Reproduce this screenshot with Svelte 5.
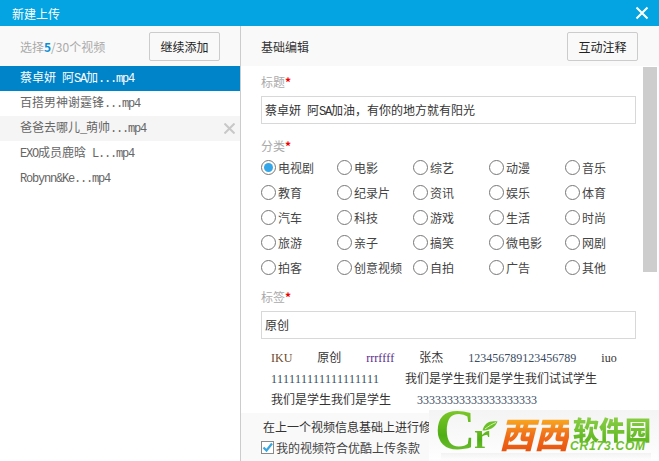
<script>
  const files = [
    { name: '蔡卓妍 阿SA加...mp4', cls: 'sel' },
    { name: '百搭男神谢霆锋...mp4', cls: '' },
    { name: '爸爸去哪儿_萌帅...mp4', cls: 'hover' },
    { name: 'EXO成员鹿晗 L...mp4', cls: '' },
    { name: 'Robynn&Ke...mp4', cls: '' }
  ];
  const parts = (s) => s.split(/([\x00-\x7f]+)/).filter(Boolean).map((t) => ({ t, ascii: /^[\x00-\x7f]/.test(t) }));
  const title = parts('蔡卓妍 阿SA加油，有你的地方就有阳光');
  const cats = ['电视剧','电影','综艺','动漫','音乐','教育','纪录片','资讯','娱乐','体育','汽车','科技','游戏','生活','时尚','旅游','亲子','搞笑','微电影','网剧','拍客','创意视频','自拍','广告','其他'];
</script>

<div class="win">
  <header class="title">
    <span>新建上传</span>
    <svg class="close" width="14" height="14" viewBox="0 0 14 14"><path d="M1.5 1.5l11 11M12.5 1.5l-11 11" stroke="#fff" stroke-width="2" fill="none"/></svg>
  </header>
  <div class="body">
    <aside class="left">
      <div class="bar lbar">
        <span class="count">选择<b>5</b>/30个视频</span>
        <button class="btn">继续添加</button>
      </div>
      <ul class="files">
        {#each files as f}
          <li class={f.cls}>
            <span class="fname">{#each parts(f.name) as p}{#if p.ascii}<span class="lat">{p.t}</span>{:else}{p.t}{/if}{/each}</span>
            {#if f.cls === 'hover'}
              <svg width="11" height="11" viewBox="0 0 11 11"><path d="M.5 .5l10 10M10.5 .5l-10 10" stroke="#c8c8c8" stroke-width="2" fill="none"/></svg>
            {/if}
          </li>
        {/each}
      </ul>
    </aside>
    <main class="right">
      <div class="bar rbar">
        <span class="edit">基础编辑</span>
        <button class="btn">互动注释</button>
      </div>
      <div class="scroll">
        <div class="form">
          <div class="label first">标题<i>*</i></div>
          <div class="input">{#each title as p}{#if p.ascii}<span class="lat">{p.t}</span>{:else}{p.t}{/if}{/each}</div>
          <div class="label cat">分类<i>*</i></div>
          <div class="grid">
            {#each cats as c, i}
              <div class="opt">
                <span class="radio" class:on={i === 0}></span>
                <span class="otext">{c}</span>
              </div>
            {/each}
          </div>
          <div class="label tag">标签<i>*</i></div>
          <div class="input">原创</div>
          <div class="tags">
            <div class="tl l1"><span class="c1">IKU</span><span>原创</span><span class="c2">rrrffff</span><span>张杰</span><span class="c3">123456789123456789</span><span class="c4">iuo</span></div>
            <div class="tl l2"><span class="c3">111111111111111111</span><span>我们是学生我们是学生我们试试学生</span></div>
            <div class="tl l3"><span>我们是学生我们是学生</span><span class="c3">33333333333333333333</span></div>
          </div>
        </div>
        <div class="track"><div class="thumb"></div></div>
      </div>
      <footer class="foot">
        <div class="inherit">在上一个视频信息基础上进行修改</div>
        <div class="agree">
          <svg width="13" height="13" viewBox="0 0 13 13"><rect x=".5" y=".5" width="12" height="12" fill="#fff" stroke="#8a8a8a"/><path d="M2.5 6.5l3 3 5.5-7" stroke="#3aa6e0" stroke-width="2.2" fill="none"/></svg>
          <span>我的视频符合优酷上传条款</span>
        </div>
      </footer>
    </main>
  </div>

  <div class="mark">
    <span class="bigc">C</span>
    <span class="smallr">r</span>
    <svg class="leaf" width="16" height="11" viewBox="0 0 16 11"><path d="M.5 10.5C2 3 8 0 15.5 1.5 13 8 7 10.5.5 10.5z" fill="#6cc12a"/><path d="M3 9C7 6 10 4 14 2.5" stroke="#d8f0b0" fill="none"/></svg>
    <div class="xixi"><span>西</span><span>西</span></div>
    <div class="rj">软件园</div>
    <div class="dom">CR173.COM</div>
    <div class="shine"></div>
  </div>
</div>

<style>
  :global(body) { margin: 0; }
  .win {
    position: relative;
    width: 659px; height: 461px; overflow: hidden; background: #fff;
    font-family: "Noto Sans CJK SC", sans-serif; font-size: 12px; color: #333;
    display: flex; flex-direction: column;
  }
  .title {
    height: 26px; background: #04a3e1; color: #fff; flex: none;
    display: flex; align-items: center; justify-content: space-between;
    padding: 0 10px 0 12px;
  }
  .body { flex: 1; display: flex; min-height: 0; }
  .left { width: 240px; flex: none; border-right: 1px solid #ccc; display: flex; flex-direction: column; }
  .right { flex: 1; display: flex; flex-direction: column; min-width: 0; }
  .bar { height: 40px; flex: none; background: #f9f9f9; display: flex; align-items: center; justify-content: space-between; }
  .lbar { padding: 0 20px; }
  .rbar { padding: 0 21px 0 20px; }
  .count { color: #aaa; }
  .count b { color: #0a8fd6; }
  .edit { color: #333; }
  .btn {
    width: 71px; height: 29px; padding: 0; box-sizing: border-box; background: #f9f9f9;
    border: 1px solid #ccc; border-radius: 2px; font: inherit; color: #222;
  }
  .files { list-style: none; margin: 0; padding: 0; }
  .files li {
    height: 25px; padding: 0 5px 0 20px; display: flex; align-items: center; justify-content: space-between;
    color: #666;
  }
  .fname { white-space: pre; line-height: 24px; padding-bottom: 1px; }
  .lat { font-family: "Liberation Mono", monospace; font-size: 12px; letter-spacing: -1.2px; white-space: pre; }
  .files li.sel { background: #0084c9; color: #fff; }
  .files li.hover { background: #f5f5f5; }
  .scroll { flex: 1; display: flex; min-height: 0; overflow: hidden; }
  .form { width: 402px; flex: none; padding-left: 20px; box-sizing: border-box; }
  .track { width: 14px; flex: none; padding-top: 1px; }
  .thumb { height: 205px; background: #cdcdcd; }
  .label { color: #aaa; line-height: 16px; }
  .label i { color: #e00; font-style: normal; font-weight: bold; }
  .first { margin-top: 8px; margin-bottom: 6px; }
  .cat { margin-top: 14px; margin-bottom: 1px; }
  .tag { margin-top: 9px; margin-bottom: 6px; }
  .input {
    width: 375px; height: 28px; box-sizing: border-box; border: 1px solid #d8d8d8;
    line-height: 25px; padding-left: 3px; color: #333; white-space: pre;
  }
  .grid { display: grid; grid-template-columns: repeat(5, 76px); grid-auto-rows: 25px; }
  .opt { display: flex; align-items: center; gap: 2px; white-space: nowrap; color: #444; }
  .otext { margin-top: -1px; }
  .radio {
    width: 15px; height: 15px; box-sizing: border-box; border: 1px solid #777; border-radius: 50%; background: #fff; flex: none;
    display: flex; align-items: center; justify-content: center;
  }
  .radio.on::after { content: ""; width: 9px; height: 9px; border-radius: 50%; background: #35a6e8; }
  .tags { padding: 9px 0 0 10px; }
  .tl { height: 21px; line-height: 20px; display: flex; gap: 25px; white-space: nowrap; font-kerning: none; font-family: "Liberation Serif", "Noto Sans CJK SC", serif; color: #333; }
  .l2, .l3 { gap: 26px; }
  .c1 { color: #6b4a2a; }
  .c2 { color: #5a2a8a; }
  .c3 { color: #3a4c64; }
  .foot { flex: none; height: 48px; background: #f9f9f9; padding-left: 20px; }
  .inherit { padding: 6px 0 0 2px; line-height: 16px; color: #333; white-space: nowrap; }
  .agree { display: flex; align-items: center; gap: 2px; margin-top: 4px; color: #444; }
  .agree svg { flex: none; }

  .mark {
    position: absolute; left: 429px; top: 410px; width: 230px; height: 51px;
    background: linear-gradient(#f4f4f4, #fbfbfb 70%, #fff); overflow: hidden;
  }
  .bigc, .smallr {
    position: absolute; font-family: "Liberation Serif", serif; font-weight: bold; line-height: 1;
    background: linear-gradient(#8ccf2e, #4fae14 60%, #78c43a); -webkit-background-clip: text; background-clip: text; color: transparent;
  }
  .bigc { left: 6px; top: -8px; font-size: 56px; }
  .smallr { left: 45px; top: 8px; font-size: 36px; }
  .leaf { position: absolute; left: 53px; top: 10px; }
  .xixi {
    position: absolute; left: 70px; top: 3px; display: flex;
    font-size: 35px; line-height: 40px; font-weight: 900; font-style: italic;
    background: linear-gradient(#fbbf24, #f0701a 55%, #e8500e); -webkit-background-clip: text; background-clip: text; color: transparent;
  }
  .rj {
    position: absolute; left: 144px; top: 5px; font-size: 26px; line-height: 28px; font-weight: 900; white-space: nowrap;
    background: linear-gradient(#8ed04a, #5cb61e); -webkit-background-clip: text; background-clip: text; color: transparent;
  }
  .dom { position: absolute; left: 141px; top: 31px; font-family: "Liberation Sans", sans-serif; font-weight: bold; font-style: italic; font-size: 12px; color: #6cc12a; letter-spacing: .8px; line-height: 11px; white-space: nowrap; }
  .shine { position: absolute; left: 12px; top: 43px; width: 210px; height: 8px; background: linear-gradient(#e8e8e8, #fff); opacity: .5; }
</style>
